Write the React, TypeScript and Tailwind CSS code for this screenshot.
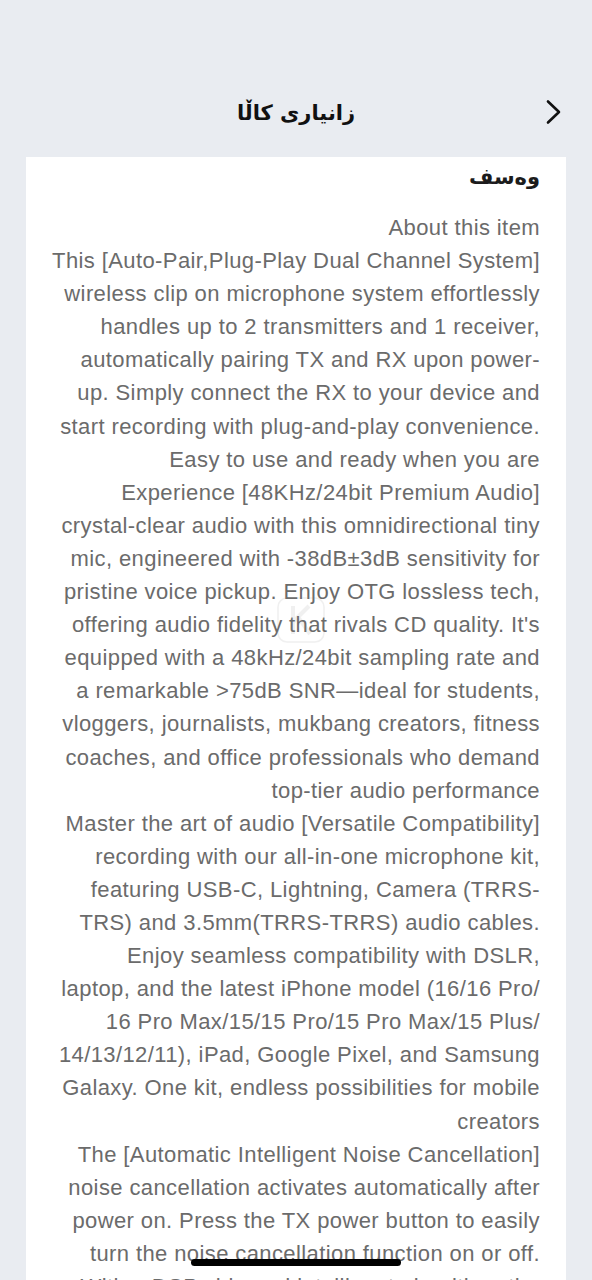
import React from "react";

const paragraphs: string[][] = [
  ["About this item"],
  [
    "This [Auto-Pair,Plug-Play Dual Channel System]",
    "wireless clip on microphone system effortlessly",
    "handles up to 2 transmitters and 1 receiver,",
    "automatically pairing TX and RX upon power-",
    "up. Simply connect the RX to your device and",
    "start recording with plug-and-play convenience.",
    "Easy to use and ready when you are",
  ],
  [
    "Experience [48KHz/24bit Premium Audio]",
    "crystal-clear audio with this omnidirectional tiny",
    "mic, engineered with -38dB±3dB sensitivity for",
    "pristine voice pickup. Enjoy OTG lossless tech,",
    "offering audio fidelity that rivals CD quality. It's",
    "equipped with a 48kHz/24bit sampling rate and",
    "a remarkable >75dB SNR—ideal for students,",
    "vloggers, journalists, mukbang creators, fitness",
    "coaches, and office professionals who demand",
    "top-tier audio performance",
  ],
  [
    "Master the art of audio [Versatile Compatibility]",
    "recording with our all-in-one microphone kit,",
    "featuring USB-C, Lightning, Camera (TRRS-",
    "TRS) and 3.5mm(TRRS-TRRS) audio cables.",
    "Enjoy seamless compatibility with DSLR,",
    "laptop, and the latest iPhone model (16/16 Pro/",
    "16 Pro Max/15/15 Pro/15 Pro Max/15 Plus/",
    "14/13/12/11), iPad, Google Pixel, and Samsung",
    "Galaxy. One kit, endless possibilities for mobile",
    "creators",
  ],
  [
    "The [Automatic Intelligent Noise Cancellation]",
    "noise cancellation activates automatically after",
    "power on. Press the TX power button to easily",
    "turn the noise cancellation function on or off.",
    "With a DSP chip and intelligent algorithm, the",
  ],
];

export default function App() {
  return (
    <div className="relative h-[1280px] w-full overflow-hidden bg-[#e9ecf1]">
      <div className="h-[157px] pt-[88px]">
        <div className="grid h-[46px] grid-cols-[1fr_auto_1fr] items-center">
          <div />
          <div
            dir="rtl"
            className="pt-[2px] text-[21px] font-bold leading-[46px] text-[#111111]"
            style={{ fontFamily: '"DejaVu Sans", "Noto Sans", sans-serif' }}
          >
            زانیاری کاڵا
          </div>
          <div className="flex justify-end pr-[28px]">
            <svg width="20" height="26" viewBox="0 0 20 26" fill="none">
              <path d="M4 2.5 L15 13 L4 23.5" stroke="#111" strokeWidth="2.6" strokeLinecap="round" strokeLinejoin="round" />
            </svg>
          </div>
        </div>
      </div>

      <div className="mx-[26px] bg-white px-[26px] pt-[4px]">
        <div
          dir="rtl"
          className="text-[21px] font-bold leading-[32px] text-[#1c1c1c]"
          style={{ fontFamily: '"DejaVu Sans", "Noto Sans", sans-serif' }}
        >
          وەسف
        </div>
        <div
          className="mt-[18px] text-right text-[22px] leading-[33.1px] tracking-[0.4px] text-[#6b6b6b]"
          style={{ fontFamily: '"Liberation Sans", Arial, sans-serif' }}
        >
          {paragraphs.map((lines, i) => (
            <p key={i}>
              {lines.map((line, j) => (
                <span key={j} className="block whitespace-nowrap">
                  {line}
                </span>
              ))}
            </p>
          ))}
        </div>
      </div>

      <div className="pointer-events-none absolute left-[277px] top-[597px] opacity-[0.12]">
        <svg width="48" height="46" viewBox="0 0 48 46" fill="none">
          <rect x="1" y="1" width="46" height="44" rx="9" stroke="#888" strokeWidth="1.5" />
          <path d="M16 9 V37 M16 25 L32 9 M21 20 L33 37" stroke="#888" strokeWidth="4" />
        </svg>
      </div>

      <div className="absolute bottom-[14px] left-1/2 h-[7px] w-[210px] -translate-x-1/2 rounded-full bg-black" />
    </div>
  );
}
